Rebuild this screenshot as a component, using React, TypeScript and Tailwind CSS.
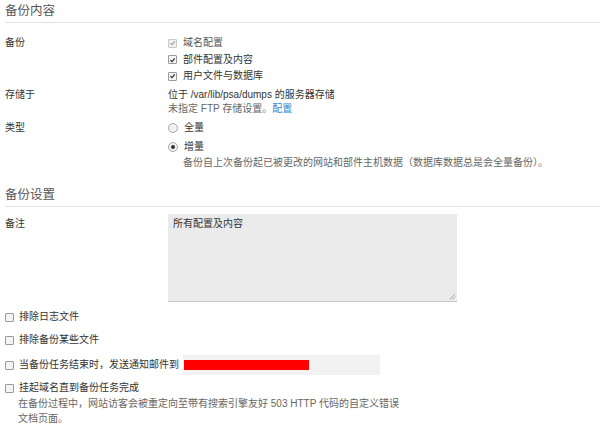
import React from "react";

const font = { fontFamily: '"Liberation Sans", "Noto Sans CJK SC", sans-serif' };

function Box({ checked, disabled }: { checked?: boolean; disabled?: boolean }) {
  return (
    <span
      className={
        "inline-flex h-[9px] w-[9px] shrink-0 items-center justify-center rounded-[1px] border " +
        (disabled ? "border-[#c8c8c8] bg-[#f0f0f0]" : "border-[#9a9a9a] bg-[#f4f4f4]")
      }
    >
      {checked && (
        <svg viewBox="0 0 10 10" className="h-[8px] w-[8px]">
          <path
            d="M2 5.2 L4.2 7.3 L8.2 2.6"
            fill="none"
            stroke={disabled ? "#a0a0a0" : "#222"}
            strokeWidth="1.6"
          />
        </svg>
      )}
    </span>
  );
}

function Radio({ checked }: { checked?: boolean }) {
  return (
    <span className="inline-flex h-[10px] w-[10px] shrink-0 items-center justify-center rounded-full border border-[#a8a8a8] bg-[#f2f2f2]">
      {checked && <span className="h-[4px] w-[4px] rounded-full bg-[#333]" />}
    </span>
  );
}

function Heading({ children }: { children: React.ReactNode }) {
  return (
    <div className="border-b border-[#e3e3e3] pb-[3px] text-[12.5px] leading-[16px] text-[#555]">
      {children}
    </div>
  );
}

export default function App() {
  return (
    <div className="h-[428px] w-[600px] overflow-hidden bg-white pl-[5px] text-[10px] leading-[14px] text-[#333]" style={font}>
      <div className="pt-[3px]">
        <Heading>备份内容</Heading>
      </div>

      <div className="mt-[13px] flex">
        <div className="w-[163px] shrink-0">备份</div>
        <div className="flex flex-col gap-[2.5px]">
          <label className="flex items-center gap-[6px] text-[#555]">
            <Box checked disabled />
            域名配置
          </label>
          <label className="flex items-center gap-[6px]">
            <Box checked />
            部件配置及内容
          </label>
          <label className="flex items-center gap-[6px]">
            <Box checked />
            用户文件与数据库
          </label>
        </div>
      </div>

      <div className="mt-[5px] flex">
        <div className="w-[163px] shrink-0">存储于</div>
        <div className="flex flex-col">
          <div>位于 /var/lib/psa/dumps 的服务器存储</div>
          <div className="text-[#666]">
            未指定 FTP 存储设置。<span className="text-[#2a8bd1]">配置</span>
          </div>
        </div>
      </div>

      <div className="mt-[5px] flex">
        <div className="w-[163px] shrink-0">类型</div>
        <div className="flex flex-col">
          <label className="flex items-center gap-[6px]">
            <Radio />
            全量
          </label>
          <label className="mt-[5px] flex items-center gap-[6px]">
            <Radio checked />
            增量
          </label>
          <div className="mt-[2px] pl-[15px] text-[#666]">
            备份自上次备份起已被更改的网站和部件主机数据（数据库数据总是会全量备份）。
          </div>
        </div>
      </div>

      <div className="mt-[17px]">
        <Heading>备份设置</Heading>
      </div>

      <div className="mt-[7px] flex">
        <div className="w-[163px] shrink-0 pt-[3px]">备注</div>
        <div className="relative h-[88px] w-[289px] border-b border-[#c9c9c9] bg-[#ebebeb] px-[5px] pt-[3px]">
          所有配置及内容
          <svg viewBox="0 0 8 8" className="absolute bottom-[1px] right-[1px] h-[7px] w-[7px]">
            <path d="M7 1 L1 7 M7 4 L4 7" stroke="#999" strokeWidth="1" />
          </svg>
        </div>
      </div>

      <label className="mt-[8px] flex items-center gap-[5px]">
        <Box />
        排除日志文件
      </label>
      <label className="mt-[9px] flex items-center gap-[5px]">
        <Box />
        排除备份某些文件
      </label>
      <div className="mt-[8px] flex items-center">
        <label className="flex w-[178px] shrink-0 items-center gap-[5px]">
          <Box />
          当备份任务结束时，发送通知邮件到
        </label>
        <div className="flex h-[20px] w-[197px] items-center bg-[#f2f2f2] pl-[1px]">
          <div className="h-[10px] w-[125px] bg-[#ff0000]" />
        </div>
      </div>
      <label className="mt-[6px] flex items-center gap-[5px]">
        <Box />
        挂起域名直到备份任务完成
      </label>
      <div className="mt-[1px] w-[395px] pl-[13px] leading-[15px] text-[#666]">
        在备份过程中，网站访客会被重定向至带有搜索引擎友好 503 HTTP 代码的自定义错误文档页面。
      </div>
    </div>
  );
}
